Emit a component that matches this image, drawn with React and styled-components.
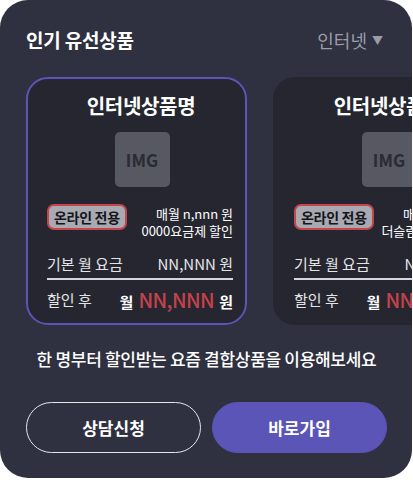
import React from 'react'
import styled, { createGlobalStyle } from 'styled-components'

const GlobalStyle = createGlobalStyle`
    body {
        margin: 0;
        background: #ffffff;
        font-family: "Noto Sans CJK KR", "Noto Sans", sans-serif;
    }
`

const Panel = styled.section`
    width: 412px;
    height: 478px;
    box-sizing: border-box;
    padding: 27px 25px 0 26px;
    background: #2f3040;
    border-radius: 28px;
    overflow: hidden;
    color: #ffffff;
`

const Header = styled.div`
    display: flex;
    justify-content: space-between;
    align-items: center;
    height: 26px;
`

const Title = styled.h2`
    margin: 0;
    font-size: 19px;
    font-weight: 700;
    line-height: 26px;
    letter-spacing: -0.2px;
`

const Filter = styled.div`
    display: flex;
    align-items: center;
    gap: 5px;
    color: #9c9ca6;
    font-size: 18px;
    line-height: 26px;
    margin-right: 4px;

    span {
        font-size: 11px;
    }
`

const Carousel = styled.div`
    display: flex;
    gap: 26px;
    margin-top: 24px;
    margin-right: -25px;
    overflow: hidden;
`

const Card = styled.div`
    flex-shrink: 0;
    width: 221px;
    height: 248px;
    box-sizing: border-box;
    padding: 15px 12px 0 19px;
    background: #25262f;
    border: 2px solid ${p => (p.active ? '#5a55b6' : 'transparent')};
    border-radius: 22px;
    display: flex;
    flex-direction: column;
`

const CardTitle = styled.div`
    text-align: center;
    font-size: 20px;
    font-weight: 700;
    line-height: 24px;
    letter-spacing: -0.3px;
    margin-right: -2px;
`

const Thumb = styled.div`
    align-self: center;
    width: 55px;
    height: 55px;
    margin-top: 14px;
    margin-right: -4px;
    border-radius: 5px;
    background: #565862;
    color: #2a2b33;
    font-size: 17px;
    font-weight: 700;
    display: flex;
    align-items: center;
    justify-content: center;
`

const OfferRow = styled.div`
    display: flex;
    justify-content: space-between;
    align-items: flex-start;
    margin-top: 17px;
`

const Badge = styled.div`
    height: 26px;
    box-sizing: border-box;
    padding: 0 5px;
    border: 2px solid #c4454c;
    border-radius: 7px;
    background: #a9a9b1;
    color: #15151a;
    font-size: 14px;
    font-weight: 700;
    line-height: 22px;
    letter-spacing: -0.3px;
    white-space: nowrap;
`

const OfferText = styled.div`
    text-align: right;
    font-size: 13px;
    line-height: 17px;
    white-space: nowrap;
    margin-top: 1px;
`

const PriceRow = styled.div`
    display: flex;
    justify-content: space-between;
    align-items: center;
    margin-top: ${p => p.gap}px;
    height: ${p => p.h}px;
    font-size: 15px;
    color: #e4e4e8;
    white-space: nowrap;
`

const Divider = styled.div`
    height: 2px;
    margin-top: 5px;
    background: #d6d6da;
`

const Final = styled.div`
    display: flex;
    align-items: baseline;
    gap: 5px;
    font-size: 15px;
    font-weight: 700;
    color: #ffffff;

    em {
        font-style: normal;
        font-size: 20px;
        font-weight: 500;
        letter-spacing: -0.6px;
        color: #c4434b;
    }
`

const Message = styled.p`
    margin: 22px 0 0;
    text-align: center;
    font-size: 17px;
    font-weight: 500;
    line-height: 24px;
    letter-spacing: -0.3px;
`

const Buttons = styled.div`
    display: flex;
    gap: 11px;
    margin-top: 31px;
`

const Button = styled.button`
    flex: 1;
    height: 51px;
    border-radius: 26px;
    font-family: inherit;
    font-size: 17px;
    font-weight: 700;
    color: #ffffff;
    border: 1.5px solid ${p => (p.primary ? '#5a55b6' : '#e6e6ea')};
    background: ${p => (p.primary ? '#5a55b6' : 'transparent')};
`

const products = [
    { active: true, plan: '0000요금제 할인' },
    { active: false, plan: '더슬림요금제 할인' },
]

const ProductCard = ({ active, plan }) => (
    <Card active={active}>
        <CardTitle>인터넷상품명</CardTitle>
        <Thumb>IMG</Thumb>
        <OfferRow>
            <Badge>온라인 전용</Badge>
            <OfferText>
                매월 n,nnn 원
                <br />
                {plan}
            </OfferText>
        </OfferRow>
        <PriceRow gap={14} h={20}>
            <span>기본 월 요금</span>
            <span>NN,NNN 원</span>
        </PriceRow>
        <Divider />
        <PriceRow gap={6} h={26}>
            <span>할인 후</span>
            <Final>
                월 <em>NN,NNN</em> 원
            </Final>
        </PriceRow>
    </Card>
)

const App = () => (
    <>
        <GlobalStyle />
        <Panel>
            <Header>
                <Title>인기 유선상품</Title>
                <Filter>
                    인터넷<span>▼</span>
                </Filter>
            </Header>
            <Carousel>
                {products.map((item, index) => (
                    <ProductCard key={index} {...item} />
                ))}
            </Carousel>
            <Message>한 명부터 할인받는 요즘 결합상품을 이용해보세요</Message>
            <Buttons>
                <Button>상담신청</Button>
                <Button primary>바로가입</Button>
            </Buttons>
        </Panel>
    </>
)

export default App
